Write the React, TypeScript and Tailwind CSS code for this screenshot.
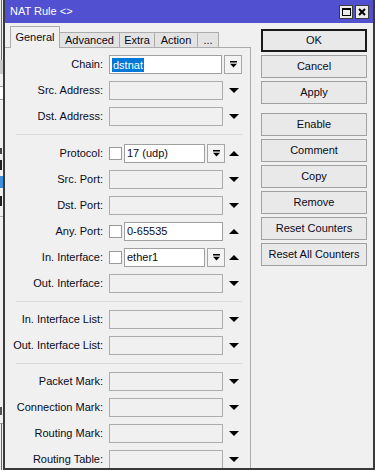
import React from "react";

const DownArrow = () => (
  <svg width="10" height="5" viewBox="0 0 10 5" className="block">
    <path d="M0 0h10L5 5z" fill="#000" />
  </svg>
);

const UpArrow = () => (
  <svg width="10" height="5" viewBox="0 0 10 5" className="block">
    <path d="M5 0l5 5H0z" fill="#000" />
  </svg>
);

const DropButton = () => (
  <div className="ml-[2px] flex h-[19px] w-[18px] items-center justify-center border border-[#a6a6a6] bg-[#f4f4f4]">
    <svg width="7" height="7" viewBox="0 0 7 7" className="block">
      <path d="M0 0h7v1.6H0z M0 2.8h7L3.5 6.6z" fill="#000" />
    </svg>
  </div>
);

const Check = () => (
  <div className="h-[13px] w-[13px] border border-[#9a9a9a] bg-white" />
);

function Label({ text }: { text: string }) {
  return <div className="w-[99px] shrink-0 pr-[1px] text-right">{text}</div>;
}

function EmptyRow({ label }: { label: string }) {
  return (
    <div className="flex h-[19px] items-center">
      <Label text={label} />
      <div className="ml-[5px] h-[19px] w-[114px] border border-[#adadad] bg-[#f0f0f0]" />
      <div className="ml-[6px]">
        <DownArrow />
      </div>
    </div>
  );
}

const Separator = ({ after }: { after: string }) => (
  <div className={`ml-[11px] mt-[8px] h-px w-[226px] bg-[#dadada] ${after}`} />
);

const buttons = [
  ["OK", "Cancel", "Apply"],
  ["Enable", "Comment", "Copy", "Remove", "Reset Counters", "Reset All Counters"],
];

export default function App() {
  return (
    <div className="flex h-[470px] w-[375px] overflow-hidden bg-[#f0f0f0] font-['Liberation_Sans',Arial,sans-serif] text-[11px] text-[#0a0a20]">
      {/* window behind */}
      <div className="flex w-[3px] shrink-0 flex-col bg-[#f0f0f0]">
        <div className="ml-[1px] h-[60px] w-px bg-[#6a6a6a]" />
        <div className="h-[14px] bg-[#c8c8c8]" />
        <div className="mt-[12px] h-[14px] border-y border-[#9a9a9a] bg-white" />
        <div className="mt-[48px] h-[6px] w-[2px] bg-[#444]" />
        <div className="mt-[6px] h-[10px] w-[2px] bg-[#222]" />
        <div className="mt-[6px] h-[12px] bg-[#3d8fe0]" />
        <div className="mt-[8px] h-[10px] w-[2px] bg-[#222]" />
        <div className="mt-[10px] h-px bg-[#b0b0b0]" />
        <div className="mt-[190px] h-[8px] w-[2px] bg-[#555]" />
        <div className="mt-[8px] h-px bg-[#9a9a9a]" />
        <div className="ml-[1px] flex-1 w-px bg-[#6a6a6a]" />
      </div>

      {/* NAT Rule window */}
      <div className="flex flex-1 flex-col border-b-2 border-l-2 border-r-2 border-[#3a3a3a]">
        <div className="flex h-[23px] shrink-0 items-center bg-[#5050d0] pl-[5px] pr-[4px] text-white">
          <span className="flex-1">NAT Rule &lt;&gt;</span>
          <div className="flex h-[14px] w-[14px] items-center justify-center border border-[#3c3c3c] bg-[#ececec]">
            <div className="h-[8px] w-[9px] border border-t-2 border-black" />
          </div>
          <div className="ml-[2px] flex h-[14px] w-[14px] items-center justify-center border border-[#3c3c3c] bg-[#ececec]">
            <svg width="8" height="8" viewBox="0 0 8 8" className="block">
              <path d="M1 1l6 6M7 1L1 7" stroke="#000" strokeWidth="2" />
            </svg>
          </div>
        </div>

        <div className="flex flex-1 overflow-hidden pt-[3px]">
          {/* tabs + panel */}
          <div className="flex w-[246px] shrink-0 flex-col">
            <div className="flex h-[21px] items-end pl-[5px]">
              <div className="relative z-10 mb-[-1px] flex h-[22px] w-[50px] items-center justify-center border border-b-0 border-[#acacac] bg-[#f0f0f0] pb-[1px]">
                General
              </div>
              <div className="flex h-[15px] w-[60px] items-center justify-center border-r border-t border-[#acacac] bg-[#e3e3e3]">
                Advanced
              </div>
              <div className="flex h-[15px] w-[35px] items-center justify-center border-r border-t border-[#acacac] bg-[#e3e3e3]">
                Extra
              </div>
              <div className="flex h-[15px] w-[43px] items-center justify-center border-r border-t border-[#acacac] bg-[#e3e3e3]">
                Action
              </div>
              <div className="flex h-[15px] w-[21px] items-center justify-center border-r border-t border-[#acacac] bg-[#e3e3e3]">
                ...
              </div>
            </div>

            <div className="flex flex-1 flex-col border-r border-t border-[#acacac] pt-[7px]">
              <div className="flex flex-col gap-[7px]">
                <div className="flex h-[19px] items-center">
                  <Label text="Chain:" />
                  <div className="ml-[5px] flex h-[19px] w-[113px] items-center border border-[#a0a0a0] bg-white pl-[2px]">
                    <span className="bg-[#0078d7] px-px leading-[14px] text-white">dstnat</span>
                  </div>
                  <DropButton />
                </div>
                <EmptyRow label="Src. Address:" />
                <EmptyRow label="Dst. Address:" />
              </div>
              <Separator after="mb-[9px]" />

              <div className="flex flex-col gap-[7px]">
                <div className="flex h-[19px] items-center">
                  <Label text="Protocol:" />
                  <div className="ml-[5px]">
                    <Check />
                  </div>
                  <div className="ml-[2px] flex h-[19px] w-[81px] items-center border border-[#a0a0a0] bg-white pl-[2px]">
                    17 (udp)
                  </div>
                  <DropButton />
                  <div className="ml-[4px]">
                    <UpArrow />
                  </div>
                </div>
                <EmptyRow label="Src. Port:" />
                <EmptyRow label="Dst. Port:" />
                <div className="flex h-[19px] items-center">
                  <Label text="Any. Port:" />
                  <div className="ml-[5px]">
                    <Check />
                  </div>
                  <div className="ml-[2px] flex h-[19px] w-[99px] items-center border border-[#a0a0a0] bg-white pl-[2px]">
                    0-65535
                  </div>
                  <div className="ml-[6px]">
                    <UpArrow />
                  </div>
                </div>
                <div className="flex h-[19px] items-center">
                  <Label text="In. Interface:" />
                  <div className="ml-[5px]">
                    <Check />
                  </div>
                  <div className="ml-[2px] flex h-[19px] w-[81px] items-center border border-[#a0a0a0] bg-white pl-[2px]">
                    ether1
                  </div>
                  <DropButton />
                  <div className="ml-[4px]">
                    <UpArrow />
                  </div>
                </div>
                <EmptyRow label="Out. Interface:" />
              </div>
              <Separator after="mb-[8px]" />

              <div className="flex flex-col gap-[7px]">
                <EmptyRow label="In. Interface List:" />
                <EmptyRow label="Out. Interface List:" />
              </div>
              <Separator after="mb-[8px]" />

              <div className="flex flex-col gap-[7px]">
                <EmptyRow label="Packet Mark:" />
                <EmptyRow label="Connection Mark:" />
                <EmptyRow label="Routing Mark:" />
                <EmptyRow label="Routing Table:" />
              </div>
            </div>
          </div>

          {/* action buttons */}
          <div className="ml-[10px] flex w-[106px] shrink-0 flex-col pt-[3px]">
            {buttons.map((group, gi) => (
              <div key={gi} className={`flex flex-col gap-[3px] ${gi ? "mt-[9px]" : ""}`}>
                {group.map((b) => (
                  <div
                    key={b}
                    className={`flex h-[23px] items-center justify-center bg-[#e9e9e9] ${
                      b === "OK" ? "border-2 border-[#1a1a1a]" : "border border-[#a0a0a0]"
                    }`}
                  >
                    {b}
                  </div>
                ))}
              </div>
            ))}
          </div>
        </div>
      </div>
    </div>
  );
}
